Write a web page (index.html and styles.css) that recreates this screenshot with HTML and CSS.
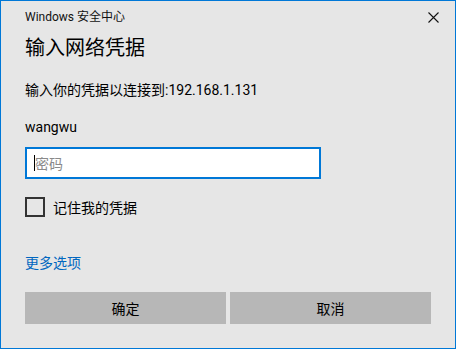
FILE: index.html
```html
<!DOCTYPE html>
<html lang="zh-CN">
<head>
<meta charset="utf-8"/>
<meta content="width=device-width, initial-scale=1.0" name="viewport"/>
<title>Windows 安全中心</title>
<link rel="stylesheet" href="styles.css">
</head>
<body>
<div class="dialog">
  <div class="titlebar">
    <span class="app-name">Windows 安全中心</span>
    <span class="close">
      <svg width="11" height="11" viewBox="0 0 11 11">
        <path d="M0.5 0.5 L10.5 10.5 M10.5 0.5 L0.5 10.5" stroke="#111" stroke-width="1.1" fill="none"/>
      </svg>
    </span>
  </div>
  <h1>输入网络凭据</h1>
  <p class="prompt">输入你的凭据以连接到:192.168.1.131</p>
  <p class="user">wangwu</p>
  <div class="field"><span class="caret"></span><span class="placeholder">密码</span></div>
  <label class="remember"><span class="box"></span>记住我的凭据</label>
  <a class="more" href="#">更多选项</a>
  <div class="actions">
    <button>确定</button>
    <button>取消</button>
  </div>
</div>
</body>
</html>
```

FILE: styles.css
```css
body {
  margin: 0;
  font-family: Roboto, "Noto Sans CJK SC", sans-serif;
  color: #000;
}
.dialog {
  box-sizing: border-box;
  width: 456px;
  height: 349px;
  border: 1px solid #0078d7;
  background: #e6e6e6;
  padding: 0 24px;
}
.titlebar {
  display: flex;
  align-items: center;
  justify-content: space-between;
  height: 32px;
  margin-right: -24px;
}
.app-name {
  font-size: 12px;
  line-height: 16px;
  color: #111;
}
.close {
  width: 44px;
  height: 32px;
  display: flex;
  align-items: center;
  justify-content: center;
}
h1 {
  margin: 1px 0 0;
  font-size: 20px;
  font-weight: normal;
  line-height: 28px;
}
.prompt {
  margin: 18px 0 0;
  font-size: 14px;
  line-height: 20px;
}
.user {
  margin: 17px 0 0;
  font-size: 14px;
  line-height: 20px;
}
.field {
  box-sizing: border-box;
  width: 296px;
  height: 32px;
  margin-top: 10px;
  border: 2px solid #0078d7;
  background: #fff;
  display: flex;
  align-items: center;
  padding-left: 7px;
}
.caret {
  width: 1px;
  height: 16px;
  background: #000;
}
.placeholder {
  font-size: 14px;
  color: #8a8a8a;
}
.remember {
  display: flex;
  align-items: center;
  gap: 8px;
  margin-top: 18px;
  height: 20px;
  font-size: 14px;
}
.box {
  box-sizing: border-box;
  width: 20px;
  height: 20px;
  border: 2px solid #333;
}
.more {
  display: block;
  margin-top: 36px;
  font-size: 14px;
  line-height: 20px;
  color: #0067c0;
  text-decoration: none;
}
.actions {
  display: flex;
  gap: 4px;
  margin-top: 19px;
}
.actions button {
  flex: 1;
  height: 32px;
  border: none;
  background: #b7b7b7;
  font-family: inherit;
  font-size: 14px;
  color: #000;
}
```
